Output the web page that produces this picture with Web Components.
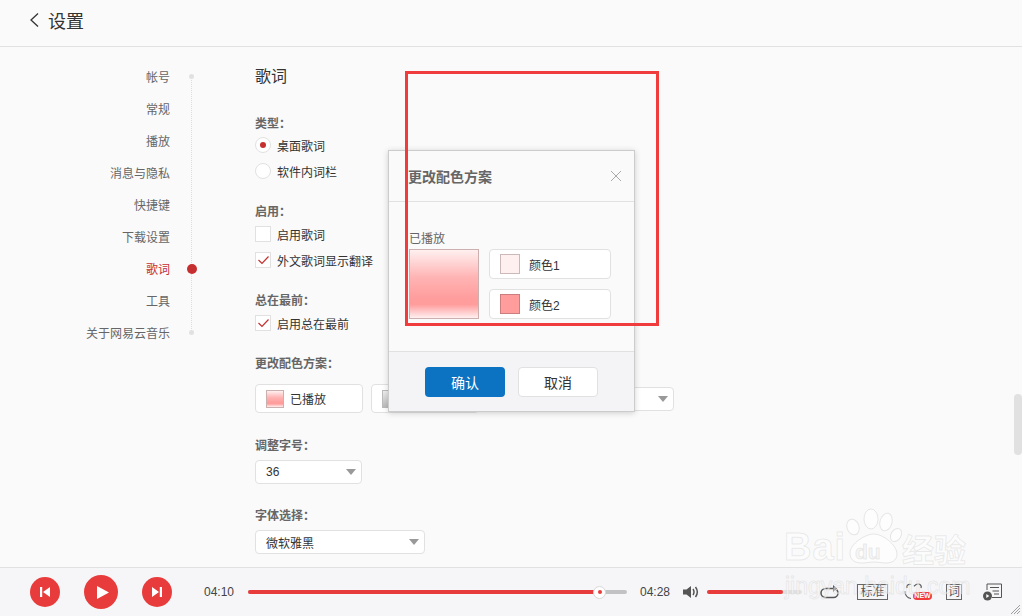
<!DOCTYPE html>
<html lang="zh"><head><meta charset="utf-8"><title>设置</title>
<style>
html,body{margin:0;height:100%;overflow:hidden;background:#fafafa}
body{font:12px "Liberation Sans","Noto Sans CJK SC",sans-serif;color:#333}
</style></head><body>
<x-app>
  <x-header slot="head">设置</x-header>
  <x-nav slot="nav"></x-nav>
  <x-settings slot="main"></x-settings>
  <x-player slot="foot"></x-player>
</x-app>
<x-modal></x-modal>
<x-mark></x-mark>
<x-watermark></x-watermark>
<script>
const F="'Liberation Sans','Noto Sans CJK SC',sans-serif";
function def(name,html){customElements.define(name,class extends HTMLElement{
  connectedCallback(){ if(this.shadowRoot)return; const r=this.attachShadow({mode:'open'}); r.innerHTML=typeof html==='function'?html(this):html; }
});}
def('x-app',`<style>:host{display:grid;grid-template-rows:47px 520px 49px;width:1022px;height:616px;position:relative;overflow:hidden}
.mid{display:flex;overflow:hidden;position:relative}
.thumb{position:absolute;right:0;top:347px;width:8px;height:61px;border-radius:4px;background:#e1e1e2}</style>
<slot name="head"></slot><div class="mid"><slot name="nav"></slot><slot name="main"></slot><div class="thumb"></div></div><slot name="foot"></slot>`);
def('x-header',`<style>:host{display:flex;align-items:center;gap:9px;padding:0 0 6px 29px;box-sizing:border-box;height:47px;border-bottom:1px solid #e1e1e2;font-size:18px;color:#333}
svg{display:block}</style><svg width="10" height="16" viewBox="0 0 10 16"><path d="M9 1.500 2 8l7 6.500" fill="none" stroke="#333" stroke-width="1.300"/></svg><slot></slot>`);
const navItems=['帐号','常规','播放','消息与隐私','快捷键','下载设置','歌词','工具','关于网易云音乐'];
def('x-nav',`<style>:host{display:block;position:relative;width:255px;flex:none;padding-top:13px;box-sizing:border-box}
.i{display:flex;align-items:center;justify-content:flex-end;height:32px;padding-right:85px;font-size:12px;color:#666;position:relative}
.i.on{color:#c62f2f}
.line{position:absolute;left:191px;top:30px;height:256px;border-left:1px dotted #ddd}
.dot{position:absolute;left:189px;top:14px;width:5px;height:5px;border-radius:50%;background:#e1e1e2}
.on .dot{left:186.500px;top:11.500px;width:10px;height:10px;background:#c62f2f}</style>
<div class="line"></div>`+navItems.map((t,i)=>`<div class="i${i==6?' on':''}">${t}${(i==0||i==8||i==6)?'<span class="dot"></span>':''}</div>`).join(''));
def('x-label',`<style>:host{display:block;font-size:12px;font-weight:700;color:#666;line-height:16px}</style><slot></slot>`);
def('x-radio',h=>`<style>:host{display:flex;align-items:center;gap:6px;height:26px;font-size:12px;color:#333}
i{display:flex;align-items:center;justify-content:center;width:16px;height:16px;box-sizing:border-box;border:1px solid #e1e1e2;border-radius:50%;background:#fff}
b{width:6px;height:6px;border-radius:50%;background:#c62f2f}</style><i>${h.hasAttribute('on')?'<b></b>':''}</i><slot></slot>`);
def('x-check',h=>`<style>:host{display:flex;align-items:center;gap:6px;height:26px;font-size:12px;color:#333}
i{display:block;width:16px;height:16px;box-sizing:border-box;border:1px solid #e1e1e2;background:#fff}svg{display:block}</style>
<i>${h.hasAttribute('on')?'<svg width="14" height="14" viewBox="0 0 14 14"><path d="M2.500 7 6 10.500 12.500 3.500" fill="none" stroke="#c62f2f" stroke-width="1.200"/></svg>':''}</i><slot></slot>`);
def('x-select',h=>`<style>:host{display:flex;align-items:center;justify-content:space-between;box-sizing:border-box;height:24px;padding:0 5px 0 10px;background:#fff;border:1px solid #e1e1e2;border-radius:4px;font-size:12px;color:#333;width:${h.getAttribute('w')||107}px}
s{display:block;width:0;height:0;border-style:solid;border-color:#999 transparent transparent;border-width:6px 5px 0}</style><slot></slot><s></s>`);
def('x-swbtn',h=>`<style>:host{display:flex;align-items:center;gap:6px;box-sizing:border-box;height:29px;width:${h.getAttribute('w')||108}px;padding-left:10px;background:#fff;border:1px solid #e1e1e2;border-radius:4px;font-size:12px;color:#333;flex:none}
i{display:block;width:18px;height:18px;box-sizing:border-box;border:1px solid ${h.getAttribute('bd')||'#ccb0b0'};background:${h.getAttribute('bg')}}</style><i></i><slot></slot>`);
const G='linear-gradient(#fff0f0,#ffb4b4 40%,#ff9c9c 72%,#ff9c9c 80%,#fff0f0)';
def('x-settings',`<style>:host{display:block;padding-top:20px;flex:1}
h2{margin:0 0 29px;font:400 16px/20px ${F};color:#333}
.g{margin-bottom:20px}
.row{display:flex;gap:8px;margin-top:12px;align-items:center;width:419px}
.g3{margin-bottom:25px}
.sel{margin-top:6px}
x-select.wide{margin-left:auto}
x-label.m{margin-bottom:1px}
</style>
<h2>歌词</h2>
<div class="g"><x-label>类型：</x-label><x-radio on>桌面歌词</x-radio><x-radio>软件内词栏</x-radio></div>
<div class="g"><x-label class="m">启用：</x-label><x-check>启用歌词</x-check><x-check on>外文歌词显示翻译</x-check></div>
<div class="g"><x-label class="m">总在最前：</x-label><x-check on>启用总在最前</x-check></div>
<div class="g3"><x-label>更改配色方案：</x-label>
 <div class="row"><x-swbtn bg="${G}">已播放</x-swbtn><x-swbtn bg="linear-gradient(#eee,#bbb)" bd="#bbb">未播放</x-swbtn><x-select class="wide" w="190">默认</x-select></div></div>
<div class="g3" style="margin-bottom:24px"><x-label>调整字号：</x-label><div class="sel"><x-select>36</x-select></div></div>
<div><x-label>字体选择：</x-label><div class="sel"><x-select w="170">微软雅黑</x-select></div></div>`);
def('x-modal',`<style>:host{display:flex;flex-direction:column;position:absolute;left:388px;top:150px;width:247px;height:262px;box-sizing:border-box;background:#fafafa;border:1px solid #ccc;box-shadow:0 1px 6px rgba(0,0,0,.18);color:#333}
.h{display:flex;align-items:center;justify-content:space-between;height:51px;flex:none;box-sizing:border-box;border-bottom:1px solid #e1e1e2;padding:0 12px 0 19px;font-size:14px;font-weight:700;color:#666}
svg{display:block}
.b{flex:1;padding:29px 0 0 20px;box-sizing:border-box}
.l{font-size:12px;color:#666;line-height:16px;margin-bottom:2px}
.r{display:flex;gap:10px}
.box{width:70px;height:70px;box-sizing:border-box;border:1px solid #ccb0b0;background:${G}}
.c{display:flex;flex-direction:column;gap:10px}
.f{height:60px;flex:none;box-sizing:border-box;border-top:1px solid #e1e1e2;background:#f4f4f7;display:flex;justify-content:center;align-items:center;gap:13px}
.btn{display:flex;align-items:center;justify-content:center;width:80px;height:30px;box-sizing:border-box;border-radius:4px;font-size:14px}
.ok{background:#0c73c2;color:#fff}.no{background:#fff;border:1px solid #e1e1e2;color:#333}
</style>
<div class="h"><span>更改配色方案</span><svg width="12" height="12" viewBox="0 0 12 12"><path d="M1 1l10 10M11 1 1 11" stroke="#aaa" stroke-width="1" fill="none"/></svg></div>
<div class="b"><div class="l">已播放</div><div class="r"><div class="box"></div><div class="c">
<x-swbtn2 bg="#fff0f0" bd="#ccb8b8">颜色1</x-swbtn2><x-swbtn2 bg="#ff9c9c" bd="#cc7d7d">颜色2</x-swbtn2></div></div></div>
<div class="f"><div class="btn ok">确认</div><div class="btn no">取消</div></div>`);
def('x-swbtn2',h=>`<style>:host{display:flex;align-items:center;gap:9px;box-sizing:border-box;width:122px;height:30px;padding-left:10px;background:#fff;border:1px solid #e1e1e2;border-radius:4px;font-size:12px;color:#333}
i{display:block;width:20px;height:20px;box-sizing:border-box;border:1px solid ${h.getAttribute('bd')};background:${h.getAttribute('bg')}}</style><i></i><slot></slot>`);
def('x-mark',`<style>:host{display:block;position:absolute;left:405px;top:71px;width:254px;height:255px;box-sizing:border-box;border:3px solid #f03c3c;pointer-events:none}</style>`);
const R='#e83c3c';
def('x-player',`<style>:host{display:flex;align-items:center;box-sizing:border-box;height:49px;border-top:1px solid #e1e1e2;background:#f6f6f8;padding-left:30px;position:relative;color:#333}
.c{display:flex;align-items:center;justify-content:center;border-radius:50%;background:${R};flex:none}
svg{display:block;flex:none}
.t{font-size:12px;color:#444;flex:none;width:31px}
.bar{height:4px;border-radius:2px;background:#c2c2c4;position:relative;flex:none}
.fill{position:absolute;left:0;top:0;height:4px;border-radius:2px;background:${R}}
.th{position:absolute;top:-4.500px;width:13px;height:13px;box-sizing:border-box;border:1px solid #d8d8d8;border-radius:50%;background:#fff;display:flex;align-items:center;justify-content:center}
.th b{width:4px;height:4px;border-radius:50%;background:${R}}
.grip{position:absolute;right:2px;bottom:2px}
</style>
<div class="c" style="width:30px;height:30px"><svg width="10" height="10" viewBox="0 0 10 10"><path d="M0 0h2.200v10H0zM10 0v10L3 5z" fill="#fff"/></svg></div>
<div class="c" style="width:34px;height:34px;margin-left:24px"><svg width="12" height="13" viewBox="0 0 12 13" style="margin-left:3px"><path d="M0 0l12 6.500L0 13z" fill="#fff"/></svg></div>
<div class="c" style="width:30px;height:30px;margin-left:24px"><svg width="10" height="10" viewBox="0 0 10 10"><path d="M10 0H7.800v10H10zM0 0v10l7-5z" fill="#fff"/></svg></div>
<div class="t" style="margin-left:32px">04:10</div>
<div class="bar" style="width:379px;margin-left:13px"><div class="fill" style="width:352px"></div><div class="th" style="left:345px"><b></b></div></div>
<div class="t" style="margin-left:13px">04:28</div>
<svg style="margin-left:12px" width="16" height="14" viewBox="0 0 16 14"><path d="M0 4.500h3.500L8 1v12L3.500 9.500H0z" fill="#555"/><path d="M10 4c1.200 1.800 1.200 4.200 0 6M12.500 2c2.200 3 2.200 7 0 10" fill="none" stroke="#555" stroke-width="1.500"/></svg>
<div class="bar" style="width:95px;margin-left:8px;background:#e1e1e2"><div class="fill" style="width:76px"></div></div>
<svg style="margin-left:18px" width="19" height="15" viewBox="0 0 19 15"><path d="M14 3.500H6C3 3.500 1 5.500 1 8s2 4.500 5 4.500h7.500c2.500 0 4.500-2 4.500-4.500 0-1.300-.5-2.400-1.300-3.200" fill="none" stroke="#555" stroke-width="1.500"/><path d="M13 0v7l4-3.500z" fill="#555"/></svg>
<x-tag style="margin-left:18px;width:31px">标准</x-tag>
<div style="position:relative;width:28px;height:18px;margin-left:16px;flex:none">
<svg width="20" height="17" viewBox="0 0 20 17"><path d="M7 1.500C4 1 2 2.500 3 5M17 5c1-2.500-1-4-3-4-2 0-3 1.300-4 2.300M1 8c0 3.500 2 7 6 7.500" fill="none" stroke="#555" stroke-width="1.200"/></svg>
<span style="position:absolute;left:9px;top:9px;width:19px;height:8px;border-radius:4px;background:#f03c3c;color:#fff;font:700 7px/8px ${F};text-align:center">NEW</span></div>
<x-tag style="margin-left:14px;width:16px">词</x-tag>
<svg style="margin-left:21px" width="19" height="18" viewBox="0 0 19 18"><path d="M4 7V1h14.500v13.500H9M7 4.500h9M9.500 8H16M11 11h5" fill="none" stroke="#555" stroke-width="1"/><circle cx="4.500" cy="13" r="4.500" fill="#555"/><path d="M3.300 11v4l3-2z" fill="#fff"/></svg>
<svg class="grip" width="9" height="9" viewBox="0 0 9 9"><path d="M0 9l9-9M3 9l6-6M6 9l3-3" stroke="#888" stroke-width=".8"/></svg>`);
def('x-tag',`<style>:host{display:flex;align-items:center;justify-content:center;box-sizing:border-box;height:16px;border:1px solid #666;font-size:12px;color:#555;flex:none;line-height:14px}</style><slot></slot>`);
def('x-watermark',`<style>:host{display:block;position:absolute;left:784px;top:505px;width:190px;height:95px;pointer-events:none;font-family:${F}}
span{position:absolute;white-space:nowrap;color:rgba(255,255,255,.5);-webkit-text-stroke:1px rgba(190,190,190,.28)}
svg{position:absolute;left:60px;top:0}</style>
<svg width="60" height="60" viewBox="0 0 60 60" fill="rgba(255,255,255,.6)" stroke="rgba(190,190,190,.35)"><ellipse cx="9" cy="22" rx="6" ry="8" transform="rotate(-20 9 22)"/><ellipse cx="27" cy="14" rx="7" ry="10"/><ellipse cx="42" cy="17" rx="6" ry="9" transform="rotate(15 42 17)"/><ellipse cx="52" cy="30" rx="5" ry="7" transform="rotate(30 52 30)"/><path d="M30 29c9 0 23 11 23 20 0 7-6 9-11 9-4 0-9-1-12-1s-8 1-12 1c-6 0-12-2-12-10 0-9 15-19 24-19z"/></svg>
<span style="left:0;top:22px;font:700 38px/40px ${F};letter-spacing:1px">Bai</span>
<span style="left:71px;top:35px;font:700 21px/24px ${F};color:rgba(240,240,240,.5)">du</span>
<span style="left:118px;top:28px;font:700 32px/36px ${F}">经验</span>
<span style="left:1px;top:68px;font:400 23px/26px ${F}">jingyan.baidu.com</span>`);
</script>
</body></html>
